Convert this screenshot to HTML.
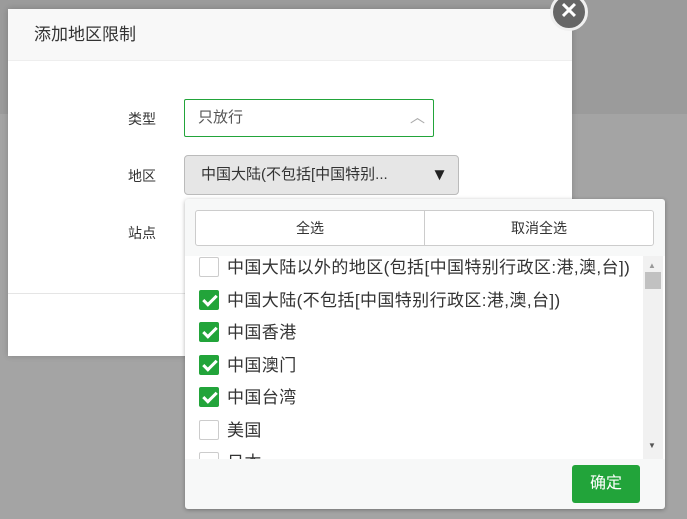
<!DOCTYPE html>
<html><head><meta charset="utf-8"><style>
*{box-sizing:border-box;margin:0;padding:0}
body{width:687px;height:519px;overflow:hidden;position:relative;font-family:"Liberation Sans","Noto Sans CJK SC",sans-serif;background:#a4a4a4;color:#333}
.top{position:absolute;left:0;top:0;width:687px;height:114px;background:#9b9b9b}
.modal{position:absolute;left:8px;top:9px;width:564px;height:347px;background:#fff;box-shadow:0 0 6px rgba(0,0,0,.2)}
.hd{height:52px;background:#f8f8f8;border-bottom:1px solid #eee;padding-left:26px;line-height:52px;font-size:17px;color:#333}
.lbl{position:absolute;left:120px;font-size:14px;color:#333}
.sel1{position:absolute;left:176px;top:90px;width:250px;height:38px;border:1px solid #22a43a;border-radius:2px;font-size:15px;line-height:36px;padding-left:13px;color:#555}
.sel2{position:absolute;left:176px;top:146px;width:275px;height:40px;border:1px solid #bbb;border-radius:4px;background:#e6e6e6;font-size:15px;line-height:38px;padding-left:16px;color:#333}
.mf{position:absolute;left:0;top:284px;width:564px;height:63px;border-top:1px solid #e5e5e5;background:#fff}
.close{position:absolute;left:550px;top:-7px;width:38px;height:38px;border-radius:50%;background:#666;border:3px solid #f0f0f0;color:#fff;font-size:22px;text-align:center;line-height:30px;font-weight:bold}
.dd{position:absolute;left:185px;top:199px;width:480px;height:310px;background:#f7f8f8;border-radius:3px;box-shadow:0 1px 4px rgba(0,0,0,.3)}
.btns{position:absolute;left:10px;top:11px;width:459px;height:36px;border:1px solid #ccc;border-radius:3px;background:#fff;display:flex;font-size:14px}
.btns div{flex:1;text-align:center;line-height:34px}
.btns div+div{border-left:1px solid #ccc}
.list{position:absolute;left:0;top:57px;width:480px;height:203px;background:#fff;overflow:hidden}
.row{position:absolute;left:14px;height:24px;font-size:17px;letter-spacing:0.4px;line-height:22px;white-space:nowrap;color:#333}
.cb{display:inline-block;width:20px;height:20px;border:1px solid #ccc;vertical-align:-4px;margin-right:8px;background:#fff;border-radius:2px;position:relative}
.cb.on{background:#22a43a;border-color:#22a43a}
.cb.on:after{content:"";position:absolute;left:6px;top:1px;width:5px;height:11px;border:solid #fff;border-width:0 3px 3px 0;transform:rotate(45deg)}
.sb{position:absolute;left:458px;top:0;width:20px;height:203px;background:#f1f1f1}
.ok{position:absolute;left:387px;top:266px;width:68px;height:38px;background:#22a43a;border-radius:3px;color:#fff;font-size:16px;text-align:center;line-height:38px}
</style></head><body>
<div class="top"></div>
<div class="modal">
<div class="hd">添加地区限制</div>
<div class="lbl" style="top:100px">类型</div>
<div class="sel1">只放行<span style="position:absolute;right:8px;top:0;color:#aaa">︿</span></div>
<div class="lbl" style="top:157px">地区</div>
<div class="sel2">中国大陆(不包括[中国特别...<span style="position:absolute;right:10px;top:0;font-size:17px;color:#222">▼</span></div>
<div class="lbl" style="top:214px">站点</div>
<div class="mf"></div>
</div>
<div class="close">✕</div>
<div class="dd">
<div class="btns"><div>全选</div><div>取消全选</div></div>
<div class="list">
<div class="row" style="top:1px"><span class="cb"></span>中国大陆以外的地区(包括[中国特别行政区:港,澳,台])</div>
<div class="row" style="top:34px"><span class="cb on"></span>中国大陆(不包括[中国特别行政区:港,澳,台])</div>
<div class="row" style="top:66px"><span class="cb on"></span>中国香港</div>
<div class="row" style="top:99px"><span class="cb on"></span>中国澳门</div>
<div class="row" style="top:131px"><span class="cb on"></span>中国台湾</div>
<div class="row" style="top:164px"><span class="cb"></span>美国</div>
<div class="row" style="top:196px"><span class="cb"></span>日本</div>
<div class="sb"><div style="position:absolute;left:5px;top:5px;font-size:8px;color:#999">▲</div><div style="position:absolute;left:2px;top:16px;width:16px;height:17px;background:#c1c1c1"></div><div style="position:absolute;left:5px;top:185px;font-size:8px;color:#555">▼</div></div>
</div>
<div class="ok">确定</div>
</div>
</body></html>
